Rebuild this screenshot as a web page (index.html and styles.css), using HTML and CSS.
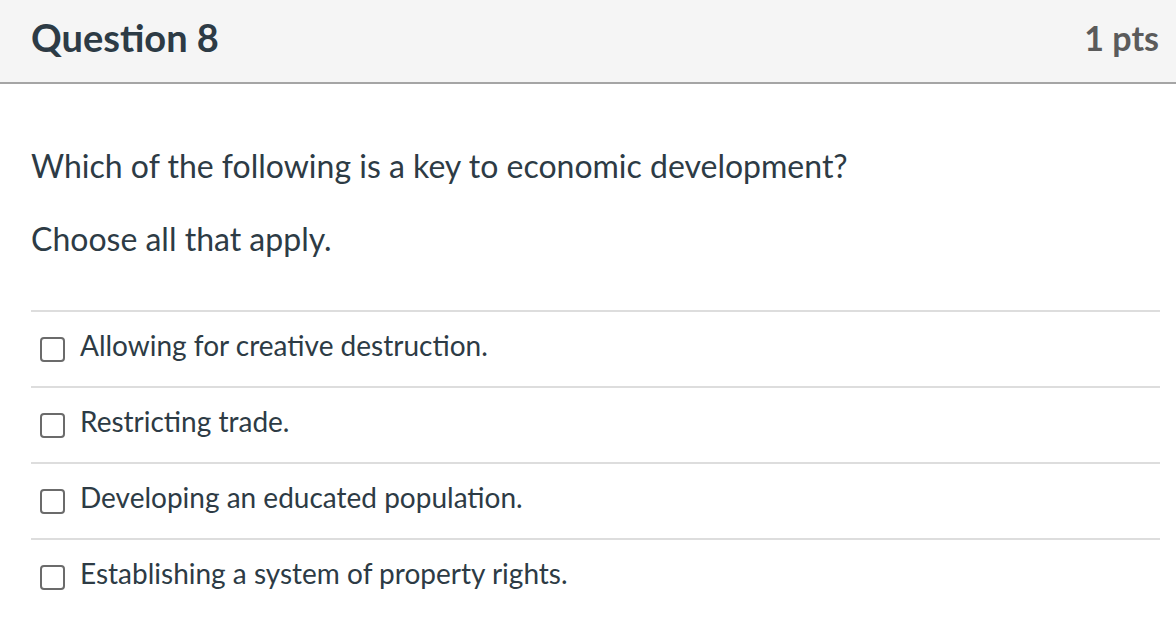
FILE: index.html
```html
<!DOCTYPE html>
<html>
<head>
<meta charset="utf-8">
<link rel="stylesheet" href="styles.css">
</head>
<body>
<div class="question">
  <div class="header">
    <h2 class="title">Question 8</h2>
    <span class="points">1 pts</span>
  </div>
  <div class="content">
    <p class="text">Which of the following is a key to economic development?</p>
    <p class="text">Choose all that apply.</p>
    <ul class="answers">
      <li class="answer"><span class="box"></span><span class="label">Allowing for creative destruction.</span></li>
      <li class="answer"><span class="box"></span><span class="label">Restricting trade.</span></li>
      <li class="answer"><span class="box"></span><span class="label">Developing an educated population.</span></li>
      <li class="answer"><span class="box"></span><span class="label">Establishing a system of property rights.</span></li>
    </ul>
  </div>
</div>
</body>
</html>
```
FILE: styles.css
```css
html, body {
  margin: 0;
  padding: 0;
  background: #ffffff;
}
body {
  font-family: Lato, "Liberation Sans", sans-serif;
  color: #2d3b45;
}
.header {
  height: 82px;
  background: #f5f5f5;
  border-bottom: 2px solid #a5a5a5;
  display: flex;
  align-items: center;
  justify-content: space-between;
  padding: 0 17px 0 31px;
}
.title {
  margin: 0;
  font-size: 38px;
  font-weight: 700;
  color: #2d3b45;
  position: relative;
  top: -4px;
}
.points {
  font-size: 34px;
  font-weight: 700;
  color: #5b5b5b;
  position: relative;
  top: -4px;
}
.content {
  padding: 61px 16px 0 31px;
}
.text {
  margin: 0 0 31px 0;
  font-size: 32px;
  line-height: 42px;
}
.text:last-of-type {
  margin-bottom: 50px;
}
.answers {
  list-style: none;
  margin: 0;
  padding: 0;
}
.answer {
  height: 74px;
  border-top: 2px solid #dddddd;
  display: flex;
  align-items: center;
  gap: 15px;
  padding-left: 9px;
}
.box {
  width: 21px;
  height: 21px;
  border: 2px solid #6b6b6b;
  border-radius: 4px;
  flex: none;
}
.label {
  font-size: 28px;
  line-height: 36px;
  margin-bottom: 8px;
}
```
